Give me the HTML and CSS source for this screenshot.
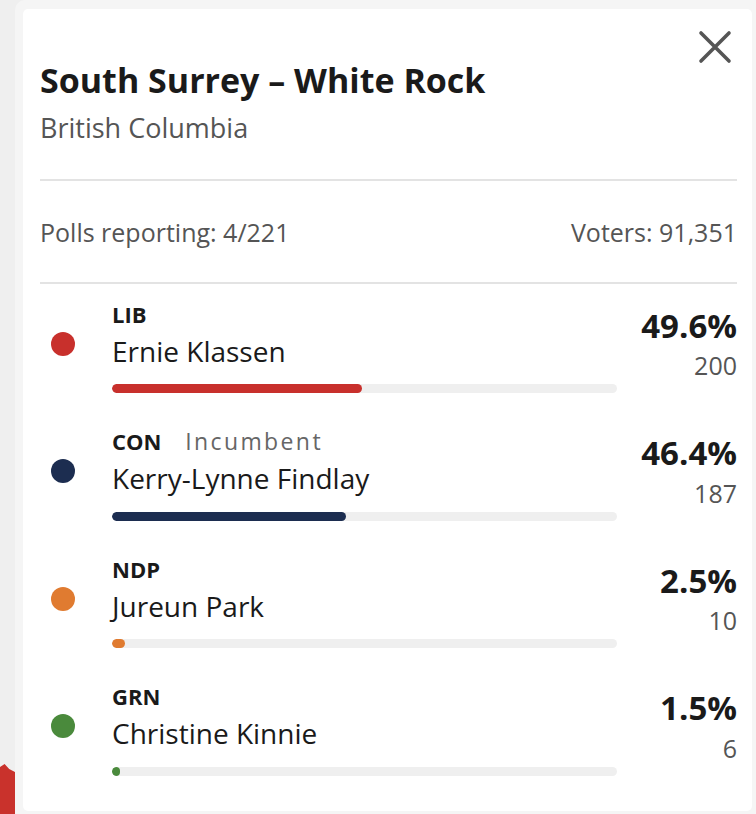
FILE: index.html
```html
<!DOCTYPE html>
<html>
<head>
<meta charset="utf-8">
<link rel="stylesheet" href="styles.css">
</head>
<body>
<div class="map-blob"></div>
<div class="panel">
  <div class="card">
    <div class="header">
      <div class="titles">
        <h1 class="title">South Surrey – White Rock</h1>
        <div class="province">British Columbia</div>
      </div>
      <button class="close" aria-label="Close">
        <svg width="34" height="34" viewBox="0 0 34 34"><path d="M3 3 L31 31 M31 3 L3 31" stroke="#555" stroke-width="3.6" stroke-linecap="round" fill="none"/></svg>
      </button>
    </div>
    <div class="stats">
      <span>Polls reporting: 4/221</span>
      <span>Voters: 91,351</span>
    </div>
    <ul class="candidates">
      <li class="cand">
        <span class="dot lib"></span>
        <div class="info">
          <div class="party">LIB</div>
          <div class="name">Ernie Klassen</div>
          <div class="bar"><div class="fill lib" style="width:49.6%"></div></div>
        </div>
        <div class="nums"><div class="pct">49.6%</div><div class="votes">200</div></div>
      </li>
      <li class="cand">
        <span class="dot con"></span>
        <div class="info">
          <div class="party">CON <span class="inc">Incumbent</span></div>
          <div class="name">Kerry-Lynne Findlay</div>
          <div class="bar"><div class="fill con" style="width:46.4%"></div></div>
        </div>
        <div class="nums"><div class="pct">46.4%</div><div class="votes">187</div></div>
      </li>
      <li class="cand">
        <span class="dot ndp"></span>
        <div class="info">
          <div class="party">NDP</div>
          <div class="name">Jureun Park</div>
          <div class="bar"><div class="fill ndp" style="width:2.5%"></div></div>
        </div>
        <div class="nums"><div class="pct">2.5%</div><div class="votes">10</div></div>
      </li>
      <li class="cand">
        <span class="dot grn"></span>
        <div class="info">
          <div class="party">GRN</div>
          <div class="name">Christine Kinnie</div>
          <div class="bar"><div class="fill grn" style="width:1.5%"></div></div>
        </div>
        <div class="nums"><div class="pct">1.5%</div><div class="votes">6</div></div>
      </li>
    </ul>
  </div>
</div>
</body>
</html>
```

FILE: styles.css
```css
* { box-sizing: border-box; }
html, body { margin: 0; padding: 0; }
body {
  background: #efefef;
  font-family: "Open Sans", "Noto Sans", sans-serif;
  color: #1a1a1a;
  width: 756px;
  height: 814px;
  overflow: hidden;
  position: relative;
}
.map-blob {
  position: absolute;
  left: 0;
  top: 764px;
  width: 23px;
  height: 50px;
  background: linear-gradient(90deg, #c9322c 0, #c9322c 15px, rgba(201,50,44,0.12) 23px);
  clip-path: polygon(0 6%, 20% 0, 40% 10%, 65% 16%, 100% 28%, 100% 100%, 0 100%);
}
.panel {
  position: relative;
  margin-left: 15px;
  height: 814px;
  background: #f5f5f5;
  border-top-left-radius: 10px;
  padding: 9px 4px 3px 8px;
}
.card {
  background: #fff;
  border-radius: 5px;
  height: 802px;
  padding: 0 15px 0 17px;
}
.header {
  display: flex;
  justify-content: space-between;
  align-items: flex-start;
  border-bottom: 2px solid #e3e3e3;
  padding-top: 54px;
  padding-bottom: 36px;
  position: relative;
}
.title {
  margin: 0;
  font-size: 34px;
  font-weight: 700;
  line-height: 34px;
  color: #1a1a1a;
}
.province {
  font-size: 27px;
  line-height: 30px;
  margin-top: 16px;
  color: #555;
}
.close {
  position: absolute;
  right: 5px;
  top: 21px;
  border: 0;
  background: none;
  padding: 0;
  width: 34px;
  height: 34px;
}
.close svg { display: block; }
.stats {
  display: flex;
  justify-content: space-between;
  font-size: 25px;
  color: #555;
  line-height: 30px;
  padding: 36px 0 35px;
  border-bottom: 2px solid #e3e3e3;
}
.candidates {
  list-style: none;
  margin: 0;
  padding: 0;
}
.cand {
  display: flex;
  align-items: flex-start;
  height: 127.5px;
  padding-top: 16.5px;
}
.dot {
  width: 24px;
  height: 24px;
  border-radius: 50%;
  margin: 31px 0 0 11px;
  flex: none;
}
.info {
  width: 505px;
  margin-left: 37px;
  flex: none;
}
.party {
  font-size: 22px;
  font-weight: 700;
  line-height: 26px;
  white-space: nowrap;
}
.inc {
  font-weight: 400;
  font-size: 23px;
  color: #666;
  margin-left: 18px;
  letter-spacing: 2.4px;
}
.name {
  font-size: 28px;
  line-height: 34px;
  margin-top: 7px;
}
.bar {
  height: 9px;
  border-radius: 5px;
  background: #efefef;
  margin-top: 16.5px;
  overflow: hidden;
}
.fill { height: 100%; border-radius: 5px; }
.nums {
  margin-left: auto;
  text-align: right;
  padding-top: 7px;
}
.pct {
  font-size: 33px;
  font-weight: 700;
  line-height: 36px;
}
.votes {
  font-size: 25px;
  color: #555;
  line-height: 30px;
  margin-top: 6.7px;
}
.lib { background: #c8302c; }
.con { background: #1c2d50; }
.ndp { background: #e07b30; }
.grn { background: #4a8a3c; }
```
